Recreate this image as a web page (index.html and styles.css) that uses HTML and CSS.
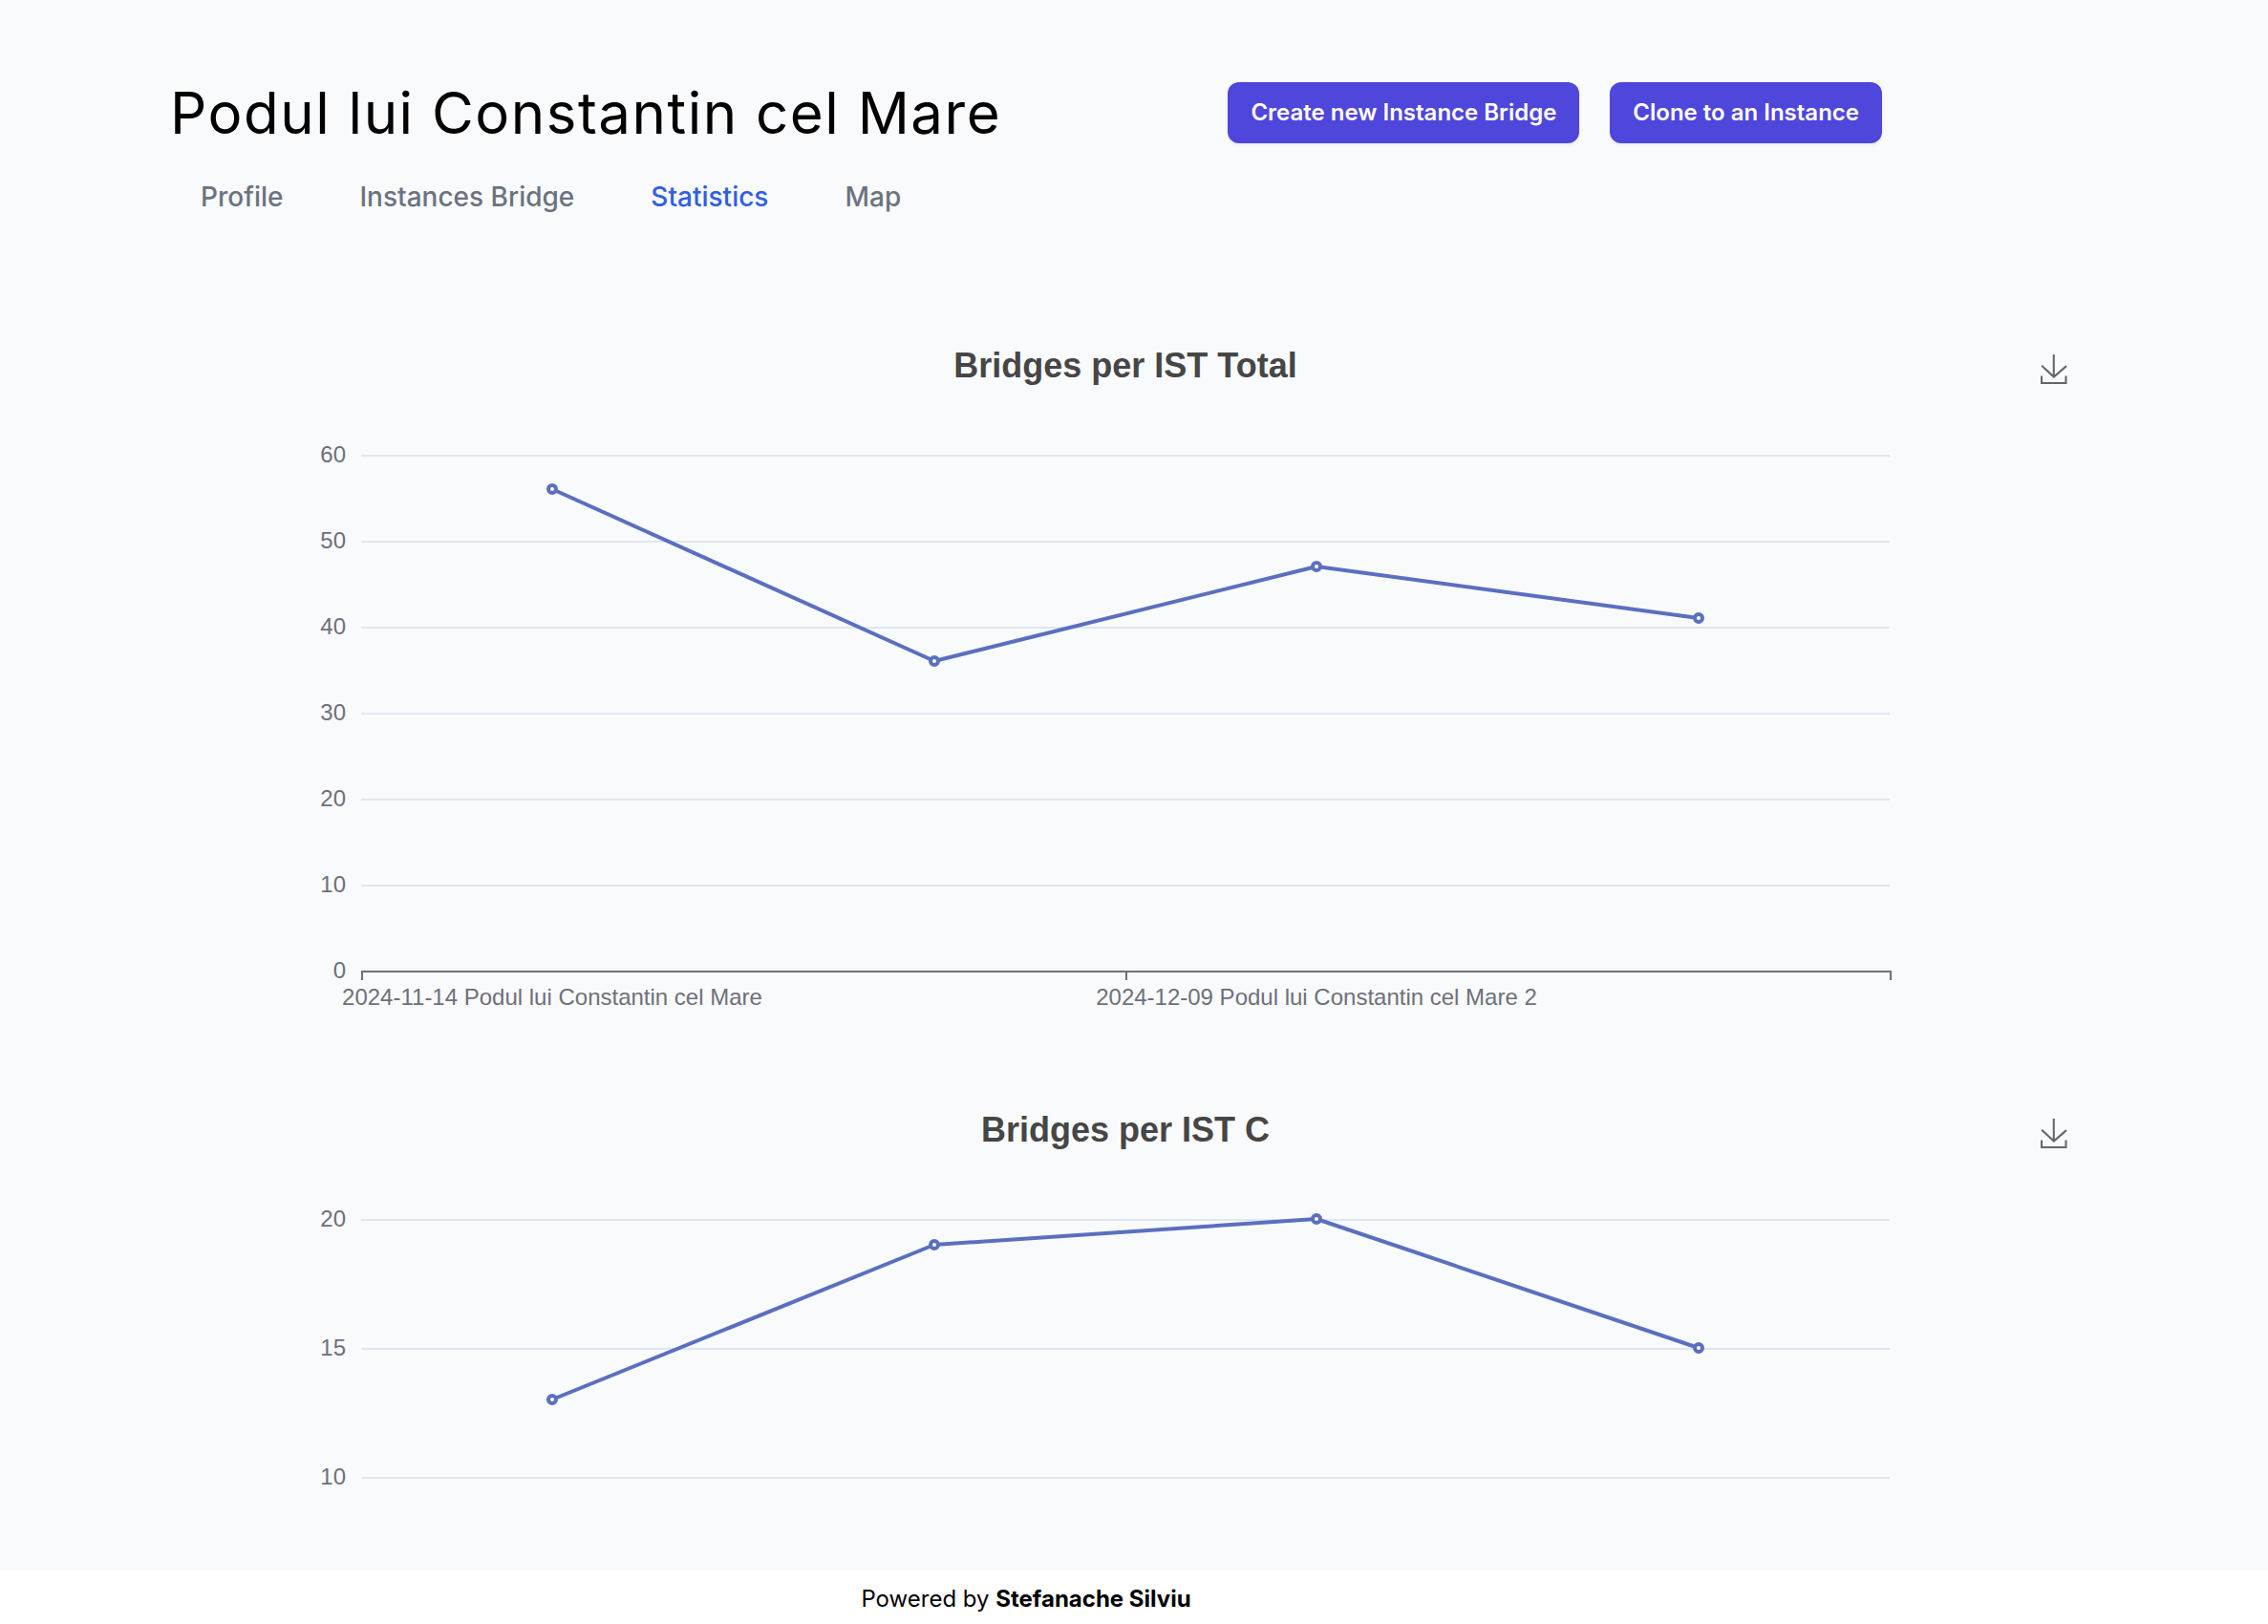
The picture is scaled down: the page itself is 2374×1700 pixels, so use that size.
FILE: index.html
```html
<!DOCTYPE html>
<html lang="en">
<head>
<meta charset="utf-8">
<meta name="viewport" content="width=device-width, initial-scale=1">
<title>Podul lui Constantin cel Mare – Statistics</title>
<link rel="stylesheet" href="styles.css">
</head>
<body>
<main class="page">
  <header class="header">
    <h1 class="title">Podul lui Constantin cel Mare</h1>
    <div class="actions">
      <button class="button" type="button">Create new Instance Bridge</button>
      <button class="button" type="button">Clone to an Instance</button>
    </div>
  </header>
  <nav class="tabs" aria-label="Bridge sections">
    <a class="tab" href="#profile">Profile</a>
    <a class="tab" href="#instances">Instances Bridge</a>
    <a class="tab tab-active" href="#statistics" aria-current="page">Statistics</a>
    <a class="tab" href="#map">Map</a>
  </nav>

  <section class="chart">
    <div class="chart-head">
      <h2 class="chart-title">Bridges per IST Total</h2>
      <button class="save" type="button" aria-label="Save chart as image">
        <svg class="save-icon" viewBox="4.6 0 50.1 58"><path d="M4.7,22.9L29.3,45.5L54.7,23.4M4.6,43.6L4.6,58L53.8,58L53.8,43.6M29.2,45.1L29.2,0"/></svg>
      </button>
    </div>
    <svg class="plot" role="img" aria-label="Line chart: 56, 36, 47, 41">
      <g class="grid">
        <line x1="10%" x2="90%" y1="0" y2="0"/>
        <line x1="10%" x2="90%" y1="90" y2="90"/>
        <line x1="10%" x2="90%" y1="180" y2="180"/>
        <line x1="10%" x2="90%" y1="270" y2="270"/>
        <line x1="10%" x2="90%" y1="360" y2="360"/>
        <line x1="10%" x2="90%" y1="450" y2="450"/>
      </g>
      <g class="axis">
        <line x1="10%" x2="90%" y1="540" y2="540"/>
        <rect x="10%" y="540" width="2" height="9"/>
        <rect x="50%" y="540" width="2" height="9"/>
        <rect x="90%" y="539" width="2" height="10"/>
      </g>
      <g class="label label-y">
        <text x="10%" y="7" dx="-16">60</text>
        <text x="10%" y="97" dx="-16">50</text>
        <text x="10%" y="187" dx="-16">40</text>
        <text x="10%" y="277" dx="-16">30</text>
        <text x="10%" y="367" dx="-16">20</text>
        <text x="10%" y="457" dx="-16">10</text>
        <text x="10%" y="547" dx="-16">0</text>
      </g>
      <g class="label label-x">
        <text x="20%" y="575">2024-11-14 Podul lui Constantin cel Mare</text>
        <text x="60%" y="575">2024-12-09 Podul lui Constantin cel Mare 2</text>
      </g>
      <g class="series">
        <line x1="20%" y1="35" x2="40%" y2="215"/>
        <line x1="40%" y1="215" x2="60%" y2="116"/>
        <line x1="60%" y1="116" x2="80%" y2="170"/>
      </g>
      <g class="points">
        <circle cx="20%" cy="35" r="4"/>
        <circle cx="40%" cy="215" r="4"/>
        <circle cx="60%" cy="116" r="4"/>
        <circle cx="80%" cy="170" r="4"/>
      </g>
    </svg>
  </section>

  <section class="chart">
    <div class="chart-head">
      <h2 class="chart-title">Bridges per IST C</h2>
      <button class="save" type="button" aria-label="Save chart as image">
        <svg class="save-icon" viewBox="4.6 0 50.1 58"><path d="M4.7,22.9L29.3,45.5L54.7,23.4M4.6,43.6L4.6,58L53.8,58L53.8,43.6M29.2,45.1L29.2,0"/></svg>
      </button>
    </div>
    <svg class="plot" role="img" aria-label="Line chart: 13, 19, 20, 15">
      <g class="grid">
        <line x1="10%" x2="90%" y1="0" y2="0"/>
        <line x1="10%" x2="90%" y1="135" y2="135"/>
        <line x1="10%" x2="90%" y1="270" y2="270"/>
      </g>
      <g class="label label-y">
        <text x="10%" y="7" dx="-16">20</text>
        <text x="10%" y="142" dx="-16">15</text>
        <text x="10%" y="277" dx="-16">10</text>
      </g>
      <g class="series">
        <line x1="20%" y1="188" x2="40%" y2="26"/>
        <line x1="40%" y1="26" x2="60%" y2="-1"/>
        <line x1="60%" y1="-1" x2="80%" y2="134"/>
      </g>
      <g class="points">
        <circle cx="20%" cy="188" r="4"/>
        <circle cx="40%" cy="26" r="4"/>
        <circle cx="60%" cy="-1" r="4"/>
        <circle cx="80%" cy="134" r="4"/>
      </g>
    </svg>
  </section>
</main>
<footer class="footer">
  <p class="credit">Powered by <strong>Stefanache Silviu</strong></p>
</footer>
</body>
</html>
```
FILE: styles.css
```css
* {
  box-sizing: border-box;
  margin: 0;
}

body {
  display: flex;
  flex-direction: column;
  height: 100vh;
  overflow: hidden;
  background: #fff;
  color: #000;
  font-family: Inter, "Liberation Sans", sans-serif;
  font-size: 24px;
  line-height: 32px;
}

.page {
  flex: 1;
  min-height: 0;
  overflow: hidden;
  padding: 80px 196px 0 178px;
  background: #f9fafc;
}

.header {
  display: flex;
  align-items: center;
  justify-content: space-between;
  max-width: 1792px;
  height: 76px;
}

.title {
  font-size: 60px;
  font-weight: 400;
  line-height: 76px;
  letter-spacing: 0.025em;
}

.actions {
  display: flex;
  gap: 32px;
}

.button {
  height: 64px;
  padding: 0 24px;
  border: 0;
  border-radius: 12px;
  background: #4f46dc;
  box-shadow: 0 2px 4px rgb(0 0 0 / 5%);
  color: #fff;
  font: 600 24px/32px Inter, "Liberation Sans", sans-serif;
}

.tabs {
  display: flex;
  gap: 80px;
  margin: 30px 0 111px;
  padding-left: 32px;
}

.tab {
  color: #6b7280;
  font-size: 28px;
  font-weight: 500;
  line-height: 40px;
  text-decoration: none;
}

.tab-active {
  color: #2f5fe3;
}

.chart {
  height: 800px;
  font-family: "Liberation Sans", Arial, sans-serif;
}

.chart-head {
  display: grid;
  grid-template-columns: 1fr auto 1fr;
  align-items: start;
  height: 140px;
  padding-top: 24px;
}

.chart-title {
  grid-column: 2;
  color: #464646;
  font-size: 36px;
  font-weight: 700;
  line-height: 44px;
}

.save {
  justify-self: end;
  margin: 8px 15px 0 0;
  padding: 2px 0;
  border: 0;
  background: none;
}

.save-icon {
  display: block;
  width: 26px;
  height: 30px;
  overflow: visible;
  fill: none;
  stroke: #666;
  stroke-width: 4;
}

.plot {
  display: block;
  width: 100%;
  height: 600px;
  overflow: visible;
}

.grid {
  stroke: #e0e6f1;
  stroke-width: 2;
}

.axis {
  fill: #6e7079;
}

.axis line {
  stroke: #6e7079;
  stroke-width: 2;
}

.label {
  fill: #6e7079;
  font-size: 24px;
}

.label-y {
  text-anchor: end;
}

.label-x {
  text-anchor: middle;
}

.series {
  stroke: #5b6fc0;
  stroke-width: 4;
}

.points {
  fill: #fff;
  stroke: #5b6fc0;
  stroke-width: 4;
}

.footer {
  padding: 13px 196px 10px 178px;
}

.credit {
  max-width: 1792px;
  text-align: center;
}
```
